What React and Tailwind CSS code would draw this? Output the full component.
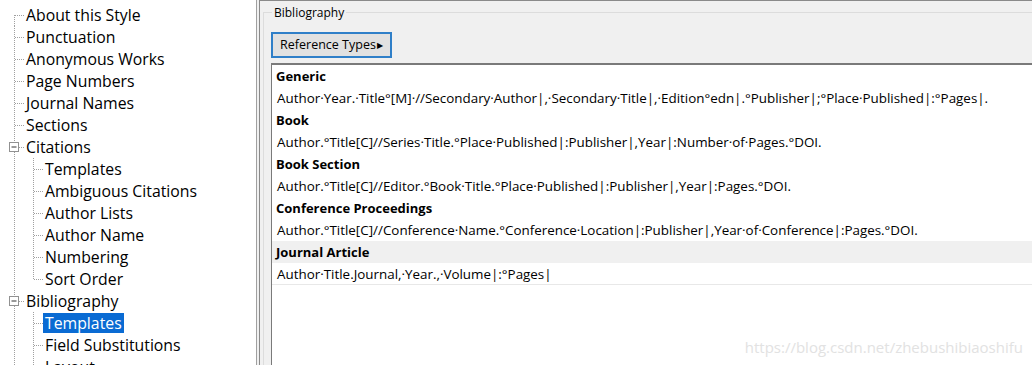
import React from "react"

const tree = [
  { label: "About this Style", level: 0, first: true },
  { label: "Punctuation", level: 0 },
  { label: "Anonymous Works", level: 0 },
  { label: "Page Numbers", level: 0 },
  { label: "Journal Names", level: 0 },
  { label: "Sections", level: 0 },
  { label: "Citations", level: 0, expander: true },
  { label: "Templates", level: 1, firstChild: true },
  { label: "Ambiguous Citations", level: 1 },
  { label: "Author Lists", level: 1 },
  { label: "Author Name", level: 1 },
  { label: "Numbering", level: 1 },
  { label: "Sort Order", level: 1, lastChild: true },
  { label: "Bibliography", level: 0, expander: true },
  { label: "Templates", level: 1, firstChild: true, selected: true },
  { label: "Field Substitutions", level: 1 },
  { label: "Layout", level: 1 },
]

const templates = [
  {
    name: "Generic",
    text: "Author·Year.·Title°[M]·//Secondary·Author|,·Secondary·Title|,·Edition°edn|.°Publisher|;°Place·Published|:°Pages|.",
  },
  {
    name: "Book",
    text: "Author.°Title[C]//Series·Title.°Place·Published|:Publisher|,Year|:Number·of·Pages.°DOI.",
  },
  {
    name: "Book Section",
    text: "Author.°Title[C]//Editor.°Book·Title.°Place·Published|:Publisher|,Year|:Pages.°DOI.",
  },
  {
    name: "Conference Proceedings",
    text: "Author.°Title[C]//Conference·Name.°Conference·Location|:Publisher|,Year·of·Conference|:Pages.°DOI.",
  },
  {
    name: "Journal Article",
    text: "Author·Title.Journal,·Year.,·Volume|:°Pages|",
    active: true,
  },
]

// dotted connector lines drawn to the left of each tree label
function Gutter({ item }) {
  const dot = { stroke: "#a0a0a0", strokeWidth: 1, strokeDasharray: "1 1" }
  const w = item.level === 0 ? 26 : 45
  return (
    <svg width={w} height="22" className="shrink-0">
      {/* top level vertical */}
      <line x1="14.5" y1={item.first ? 11 : 0} x2="14.5" y2="22" {...dot} />
      {item.level === 0 && !item.expander && <line x1="15" y1="11.5" x2="24" y2="11.5" {...dot} />}
      {item.expander && (
        <g>
          <rect x="9.5" y="6.5" width="9" height="9" fill="#fff" stroke="#919191" />
          <line x1="11.5" y1="11" x2="16.5" y2="11" stroke="#333" />
          <line x1="19" y1="11.5" x2="24" y2="11.5" {...dot} />
          <line x1="33.5" y1="16" x2="33.5" y2="22" {...dot} />
        </g>
      )}
      {item.level === 1 && (
        <g>
          <line x1="33.5" y1="0" x2="33.5" y2={item.lastChild ? 11 : 22} {...dot} />
          <line x1="34" y1="11.5" x2="43" y2="11.5" {...dot} />
        </g>
      )}
    </svg>
  )
}

export default function App() {
  return (
    <div
      className="flex h-[365px] w-[1032px] overflow-hidden bg-[#f0f0f0] text-black"
      style={{ fontFamily: '"Open Sans", "Noto Sans", sans-serif' }}
    >
      {/* Left tree */}
      <div className="w-[257px] shrink-0 border-r border-[#a0a0a0] bg-white pt-[4px]">
        {tree.map((item, i) => (
          <div key={i} className="flex h-[22px] items-center">
            <Gutter item={item} />
            <span
              className={`ml-[-2px] px-[2px] text-[15.8px] leading-[20px] ${
                item.selected ? "bg-[#0a6bd3] text-white" : ""
              }`}
            >
              {item.label}
            </span>
          </div>
        ))}
      </div>

      <div className="w-[2px] shrink-0" />

      {/* Right panel */}
      <div className="relative flex flex-1 flex-col border-l border-t border-[#8a8a8a] pl-[3px] pt-[11px]">
        <div className="relative flex flex-1 flex-col border-l border-t border-[#dcdcdc] pl-[7px] pt-[19px]">
          <span className="absolute left-[8px] top-[-10px] bg-[#f0f0f0] px-[2px] text-[12px] leading-[20px]">
            Bibliography
          </span>
          <button className="flex h-[26px] w-[121px] items-center justify-center border-2 border-[#2f7fc8] bg-[#e1e1e1] text-[12.5px]">
            Reference Types
            <span className="ml-[1px] text-[8px]">▶</span>
          </button>
          <div className="mt-[5px] flex-1 border-l border-t-2 border-[#7a7a7a] bg-white pl-[4px]">
            {templates.map((t) => (
              <div key={t.name}>
                <div
                  className={`-ml-[4px] h-[22px] pl-[4px] text-[13px] font-bold leading-[22px] ${
                    t.active ? "bg-[#f0f0f0]" : ""
                  }`}
                >
                  {t.name}
                </div>
                <div
                  className={`h-[22px] whitespace-nowrap pl-[1px] text-[13.4px] leading-[22px] ${
                    t.active ? "-ml-[4px] border-b border-[#e8e8e8] pl-[5px]" : ""
                  }`}
                >
                  {t.text}
                </div>
              </div>
            ))}
          </div>
        </div>
        {/* watermark */}
        <span className="absolute bottom-[7px] right-[9px] text-[15px] text-[#e2e2e2]">
          https://blog.csdn.net/zhebushibiaoshifu
        </span>
      </div>
    </div>
  )
}
